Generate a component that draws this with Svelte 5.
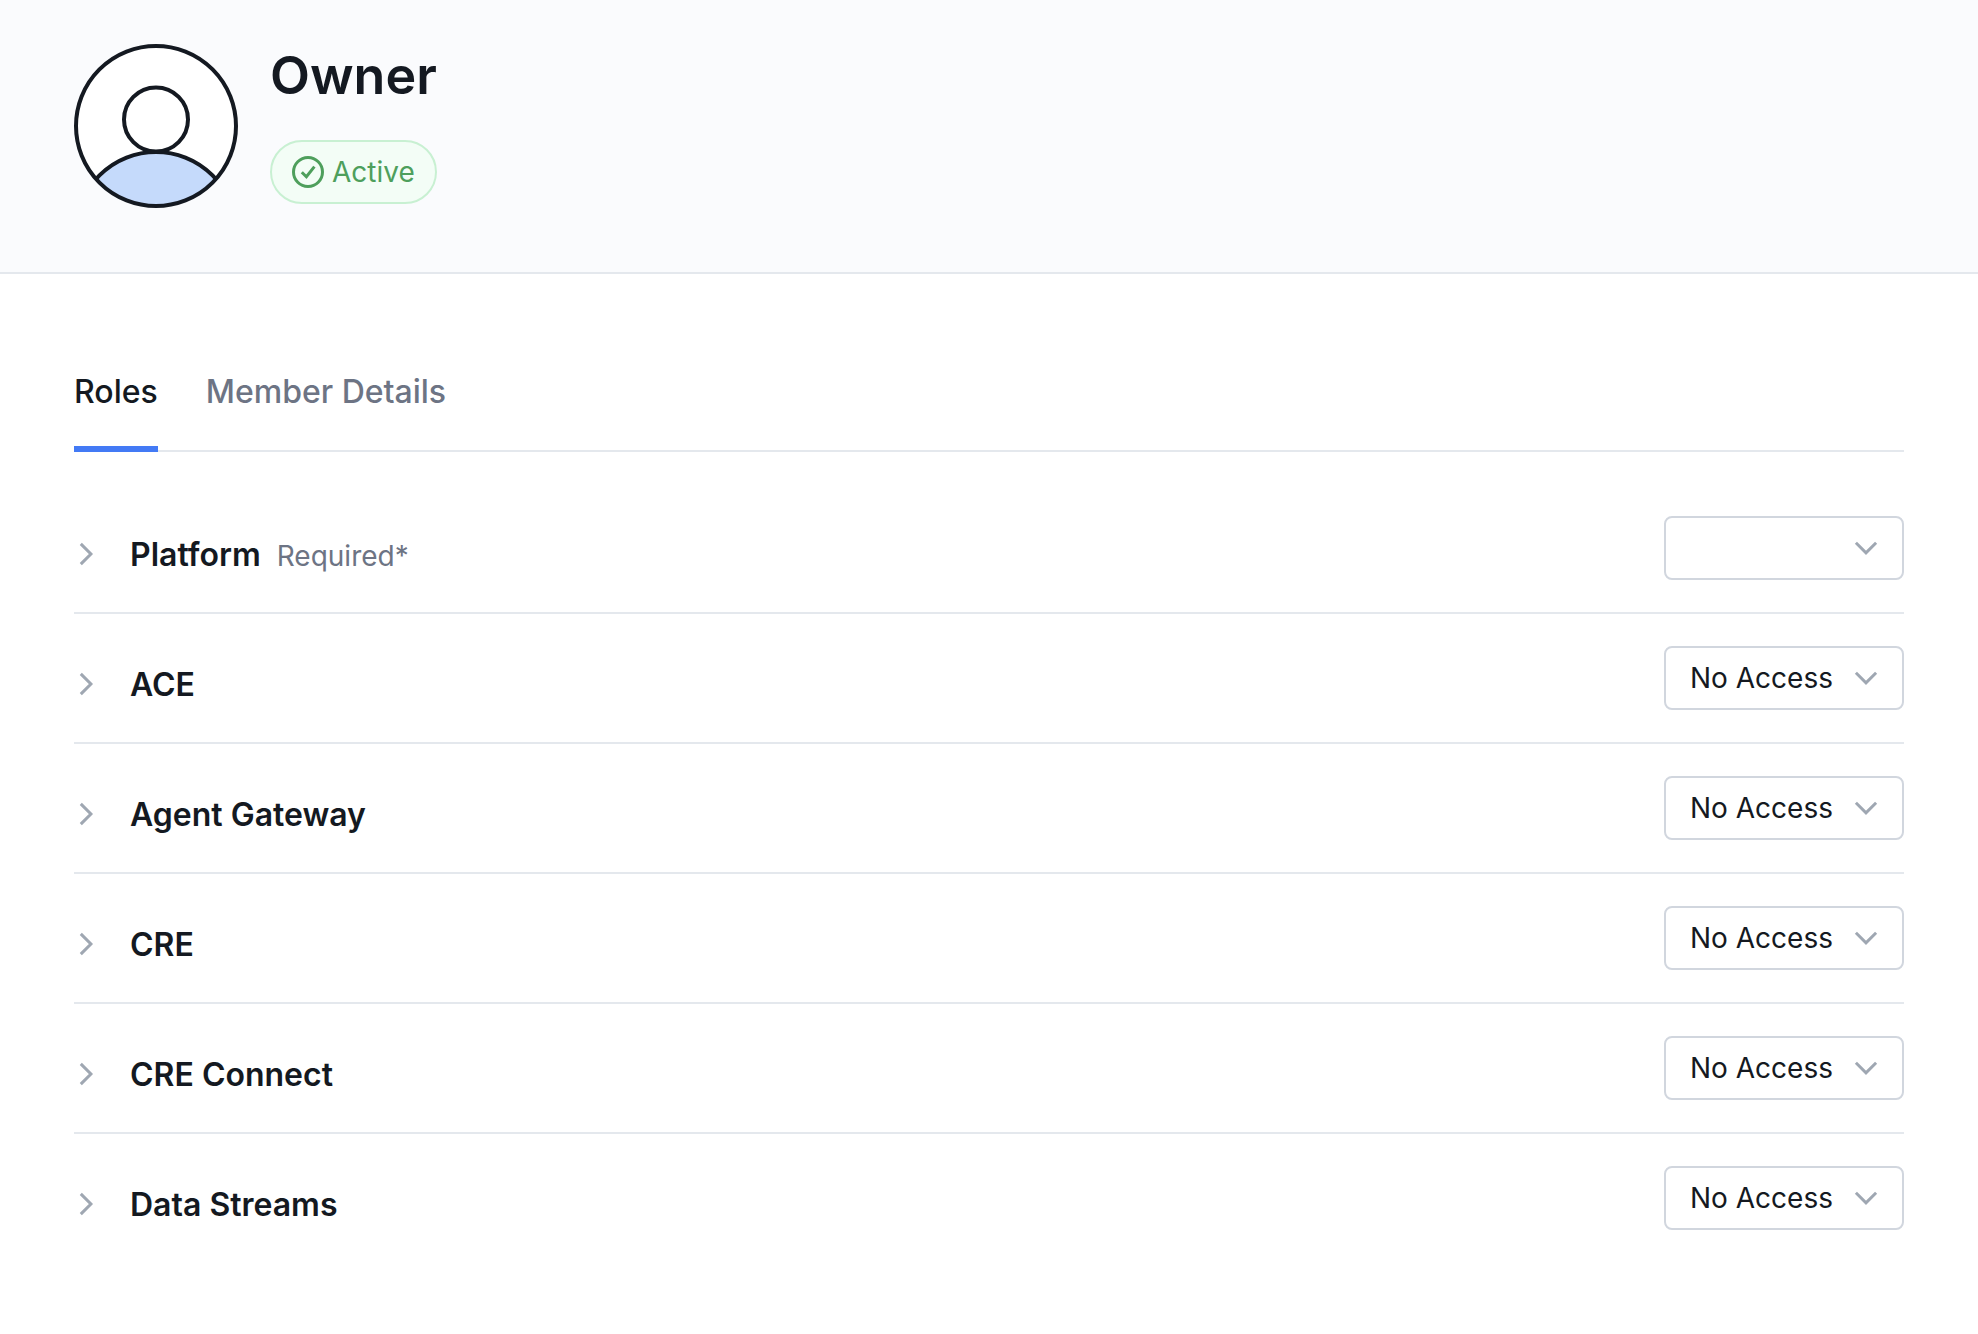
<script lang="ts">
	type Product = { id: string; name: string; required?: boolean; role: string };

	const member = { name: 'Owner', status: 'Active' };
	const tabs = ['Roles', 'Member Details'];

	let activeTab = $state('Roles');
	let products = $state<Product[]>([
		{ id: 'platform', name: 'Platform', required: true, role: '' },
		{ id: 'ace', name: 'ACE', role: 'No Access' },
		{ id: 'agent-gateway', name: 'Agent Gateway', role: 'No Access' },
		{ id: 'cre', name: 'CRE', role: 'No Access' },
		{ id: 'cre-connect', name: 'CRE Connect', role: 'No Access' },
		{ id: 'data-streams', name: 'Data Streams', role: 'No Access' }
	]);
</script>

<header class="member-header">
	<svg class="avatar" viewBox="0 0 164 164" fill="none" aria-hidden="true">
		<clipPath id="avatar-clip"><circle cx="82" cy="82" r="80" /></clipPath>
		<circle cx="82" cy="82" r="80" fill="#fff" />
		<g stroke="#141921" stroke-width="4">
			<circle cx="82" cy="188" r="80" fill="#c5dafb" clip-path="url(#avatar-clip)" />
			<circle cx="82" cy="75.5" r="32" fill="#fff" />
			<circle cx="82" cy="82" r="80" />
		</g>
	</svg>
	<div class="member-info">
		<h1>{member.name}</h1>
		<span class="badge">
			<svg viewBox="0 0 32 32" fill="none" stroke="currentColor" stroke-width="3" aria-hidden="true">
				<circle cx="16" cy="16" r="14.5" />
				<path d="M9.8 16.2l4.6 4.6 8-10.2" />
			</svg>
			{member.status}
		</span>
	</div>
</header>

<main>
	<div class="tabs" role="tablist">
		{#each tabs as tab (tab)}
			<button
				class="tab"
				class:active={tab === activeTab}
				role="tab"
				aria-selected={tab === activeTab}
				onclick={() => (activeTab = tab)}
			>
				{tab}
			</button>
		{/each}
	</div>

	<ul class="products">
		{#each products as product (product.id)}
			<li class="product">
				<div class="product-label">
					<button class="expand" aria-label="Expand {product.name}">
						<svg viewBox="0 0 24 24" fill="none" stroke="currentColor" stroke-width="3" aria-hidden="true">
							<path d="M6.8 1.9L16.9 12 6.8 22.1" />
						</svg>
					</button>
					<label for={product.id}>
						<span class="product-name">{product.name}</span>
						{#if product.required}
							<span class="required">Required*</span>
						{/if}
					</label>
				</div>
				<div class="select">
					<select id={product.id} bind:value={product.role}>
						{#if product.required}
							<option value=""></option>
						{/if}
						<option>No Access</option>
					</select>
					<svg viewBox="0 0 24 24" fill="none" stroke="currentColor" stroke-width="3" aria-hidden="true">
						<path d="M1.9 6.8L12 16.9 22.1 6.8" />
					</svg>
				</div>
			</li>
		{/each}
	</ul>
</main>

<style>
	:global(body) {
		margin: 0;
		background: #fff;
		color: #141921;
		font-family: Inter, 'Liberation Sans', sans-serif;
	}

	button,
	select {
		margin: 0;
		border: 0;
		padding: 0;
		background: none;
		color: inherit;
		font: inherit;
		cursor: pointer;
	}

	.member-header {
		display: flex;
		gap: 32px;
		padding: 44px 74px 64px;
		border-bottom: 2px solid #e4e8ed;
		background: #fafbfd;
	}

	.avatar {
		width: 164px;
		height: 164px;
	}

	.member-info {
		display: flex;
		flex-direction: column;
		align-items: flex-start;
		gap: 32px;
	}

	h1 {
		margin: 0;
		font-size: 52px;
		font-weight: 600;
		line-height: 64px;
	}

	.badge {
		display: flex;
		align-items: center;
		gap: 8px;
		padding: 0 20px;
		border: 2px solid #c8f0d2;
		border-radius: 32px;
		background: #f3fdf6;
		color: #4e9f5c;
		font-size: 28px;
		line-height: 60px;
	}

	.badge svg {
		width: 32px;
		height: 32px;
	}

	main {
		padding: 84px 74px;
	}

	.tabs {
		display: flex;
		gap: 48px;
		border-bottom: 2px solid #e4e8ed;
	}

	.tab {
		margin-bottom: -2px;
		border-bottom: 6px solid transparent;
		padding: 8px 0 28px;
		color: #6d7484;
		font-size: 32px;
		font-weight: 500;
		line-height: 52px;
	}

	.tab.active {
		border-color: #437af5;
		color: #141921;
	}

	.products {
		margin: 32px 0 0;
		padding: 0;
		list-style: none;
	}

	.product {
		display: flex;
		align-items: flex-end;
		justify-content: space-between;
		padding: 32px 0;
		border-bottom: 2px solid #e4e8ed;
	}

	.product:last-child {
		border-bottom: 0;
	}

	.product-label {
		display: flex;
		align-items: flex-end;
		gap: 32px;
	}

	.expand {
		display: flex;
		align-items: center;
		height: 52px;
		color: #9fa7b2;
	}

	.expand svg {
		width: 24px;
		height: 24px;
	}

	label {
		display: flex;
		align-items: baseline;
		gap: 16px;
	}

	.product-name {
		font-size: 32px;
		font-weight: 600;
		line-height: 50px;
	}

	.required {
		color: #6d7484;
		font-size: 28px;
		line-height: 32px;
	}

	.select {
		position: relative;
	}

	.select select {
		display: block;
		width: 240px;
		height: 64px;
		border: 2px solid #d1d6de;
		border-radius: 8px;
		padding: 0 60px 0 24px;
		appearance: none;
		background: #fff;
		font-size: 28px;
	}

	/* chevron lies over the native control */
	.select svg {
		position: absolute;
		top: 20px;
		right: 26px;
		width: 24px;
		height: 24px;
		color: #9fa7b2;
		pointer-events: none;
	}
</style>
